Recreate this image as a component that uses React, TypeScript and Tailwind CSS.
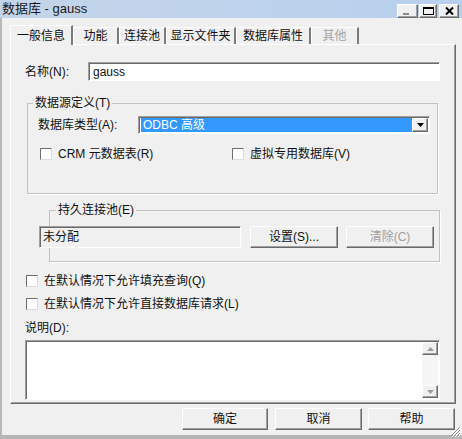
import React from "react";

const raised =
  "border border-t-white border-l-white border-b-[#696969] border-r-[#696969] shadow-[inset_-1px_-1px_0_#a0a0a0]";
const sunken =
  "border border-t-[#a0a0a0] border-l-[#a0a0a0] border-b-white border-r-white shadow-[inset_1px_1px_0_#696969]";

function Check() {
  return (
    <div className="w-[12px] h-[12px] shrink-0 bg-white border border-t-[#6f6f6f] border-l-[#6f6f6f] border-b-[#dcdcdc] border-r-[#dcdcdc]" />
  );
}

function Tab({ w, label, selected, disabled }: { w: number; label: string; selected?: boolean; disabled?: boolean }) {
  return (
    <div
      style={{ width: w }}
      className={
        "flex items-center justify-center border-t border-l border-t-white border-l-white border-r-2 border-r-[#7a7a7a] bg-[#f0f0f0] " +
        (selected ? "h-[20px] relative z-10 -mb-px" : "h-[17px]") +
        (disabled ? " text-[#a3a3a3]" : "")
      }
    >
      {label}
    </div>
  );
}

function Button({ w, label, disabled, className = "" }: { w: number; label: string; disabled?: boolean; className?: string }) {
  return (
    <div
      style={{ width: w }}
      className={`h-[22px] flex items-center justify-center bg-[#f0f0f0] ${raised} ${disabled ? "text-[#a0a0a0]" : ""} ${className}`}
    >
      {label}
    </div>
  );
}

export default function App() {
  return (
    <div className="relative w-[462px] h-[439px] bg-[#f0f0f0] flex flex-col text-[12px] leading-[14px] text-[#111] font-[family-name:'Liberation_Sans','Noto_Sans_CJK_SC',sans-serif] overflow-hidden">
      {/* Title bar */}
      <div className="h-[18px] shrink-0 flex bg-gradient-to-r from-[#c5d5e9] to-[#b7d0ee]">
        <div className="pl-[2px] flex items-center text-[13px] text-[#1a1a1a]">数据库 - gauss</div>
        <div className="ml-auto pt-[4px] pr-[3px] flex items-start">
          <div className={`w-[21px] h-[14px] bg-[#f0f0f0] ${raised} flex items-end justify-center pb-[2px]`}>
            <div className="w-[6px] h-[2px] bg-[#8a8a8a] -ml-[3px]" />
          </div>
          <div className={`ml-[1px] w-[18px] h-[14px] bg-[#f0f0f0] ${raised} flex items-center justify-center`}>
            <div className="w-[11px] h-[8px] border border-t-2 border-black" />
          </div>
          <div className={`ml-[2px] w-[20px] h-[14px] bg-[#f0f0f0] ${raised} flex items-center justify-center`}>
            <svg width="9" height="8" viewBox="0 0 9 8">
              <path d="M1 0.5 L8 7.5 M8 0.5 L1 7.5" stroke="#000" strokeWidth="2" />
            </svg>
          </div>
        </div>
      </div>

      {/* Body */}
      <div className="flex-1 flex flex-col border-l-2 border-l-[#b8b8b8] border-b-4 border-b-[#b6b6b6]">
        {/* Tabs */}
        <div className="mt-[8px] ml-[8px] h-[18px] flex items-end">
          <Tab w={63} label="一般信息" selected />
          <Tab w={46} label="功能" />
          <Tab w={47} label="连接池" />
          <Tab w={70} label="显示文件夹" />
          <Tab w={75} label="数据库属性" />
          <Tab w={48} label="其他" disabled />
        </div>

        {/* Panel */}
        <div className="ml-[8px] w-[446px] h-[360px] flex flex-col border border-t-white border-l-white border-b-[#696969] border-r-[#696969] shadow-[inset_-1px_-1px_0_#a0a0a0]">
          {/* Name */}
          <div className="mt-[17px] ml-[14px] flex items-center">
            <div className="w-[63px]">名称(N):</div>
            <div className={`w-[352px] h-[19px] bg-white ${sunken} flex items-center pl-[4px]`}>gauss</div>
          </div>

          {/* Group 1 */}
          <div className="mt-[22px] ml-[16px] w-[411px] h-[91px] border border-[#c2c2c2] shadow-[1px_1px_0_#fff]">
            <div className="-mt-[8px] ml-[5px] px-[2px] w-fit bg-[#f0f0f0]">数据源定义(T)</div>
            <div className="mt-[6px] ml-[10px] flex items-center">
              <div className="w-[100px]">数据库类型(A):</div>
              <div className={`w-[292px] h-[18px] bg-white ${sunken} flex p-[1px]`}>
                <div className="flex-1 bg-[#3399ff] text-white flex items-center pl-[2px] ml-[1px]">ODBC 高级</div>
                <div className={`w-[16px] bg-[#f0f0f0] ${raised} flex items-center justify-center`}>
                  <svg width="7" height="4" viewBox="0 0 7 4">
                    <path d="M0 0 H7 L3.5 4 Z" fill="#000" />
                  </svg>
                </div>
              </div>
            </div>
            <div className="mt-[13px] ml-[12px] flex items-center">
              <div className="w-[192px] flex items-center gap-[6px]">
                <Check />
                <span>CRM 元数据表(R)</span>
              </div>
              <div className="flex items-center gap-[6px]">
                <Check />
                <span>虚拟专用数据库(V)</span>
              </div>
            </div>
          </div>

          {/* Group 2 */}
          <div className="mt-[16px] ml-[38px] w-[391px] h-[52px] border border-[#c2c2c2] shadow-[1px_1px_0_#fff]">
            <div className="-mt-[8px] ml-[6px] px-[2px] w-fit bg-[#f0f0f0]">持久连接池(E)</div>
            <div className="mt-[9px] flex">
              <div className={`-ml-[11px] w-[202px] h-[22px] bg-[#f0f0f0] ${sunken} pl-[3px] pt-[3px]`}>未分配</div>
              <Button w={88} label="设置(S)..." className="ml-[9px]" />
              <Button w={88} label="清除(C)" disabled className="ml-[8px]" />
            </div>
          </div>

          {/* Checkboxes */}
          <div className="mt-[12px] ml-[15px] h-[14px] flex items-center gap-[6px]">
            <Check />
            <span>在默认情况下允许填充查询(Q)</span>
          </div>
          <div className="mt-[9px] ml-[15px] h-[14px] flex items-center gap-[6px]">
            <Check />
            <span>在默认情况下允许直接数据库请求(L)</span>
          </div>

          {/* Description */}
          <div className="mt-[10px] ml-[14px] h-[14px]">说明(D):</div>
          <div className={`mt-[5px] ml-[14px] w-[415px] h-[60px] bg-white ${sunken} flex justify-end p-[1px]`}>
            <div className="w-[16px] h-full bg-[#f5f5f5] flex flex-col justify-between">
              <div className={`h-[13px] bg-[#f0f0f0] ${raised} flex items-center justify-center`}>
                <svg width="7" height="4" viewBox="0 0 7 4">
                  <path d="M0 4 H7 L3.5 0 Z" fill="#9a9a9a" />
                </svg>
              </div>
              <div className={`h-[13px] bg-[#f0f0f0] ${raised} flex items-center justify-center`}>
                <svg width="7" height="4" viewBox="0 0 7 4">
                  <path d="M0 0 H7 L3.5 4 Z" fill="#9a9a9a" />
                </svg>
              </div>
            </div>
          </div>
        </div>

        {/* Bottom buttons */}
        <div className="mt-[4px] ml-[180px] flex">
          <Button w={86} label="确定" />
          <Button w={87} label="取消" className="ml-[7px]" />
          <Button w={87} label="帮助" className="ml-[6px]" />
        </div>
      </div>

      {/* Size grip */}
      <svg className="absolute right-[1px] bottom-[2px]" width="11" height="11" viewBox="0 0 11 11">
        <path d="M10 1 L1 10 M10 4 L4 10 M10 7 L7 10" stroke="#8a8a8a" strokeWidth="1" />
        <path d="M11 2 L2 11 M11 5 L5 11 M11 8 L8 11" stroke="#ffffff" strokeWidth="1" />
      </svg>
    </div>
  );
}
